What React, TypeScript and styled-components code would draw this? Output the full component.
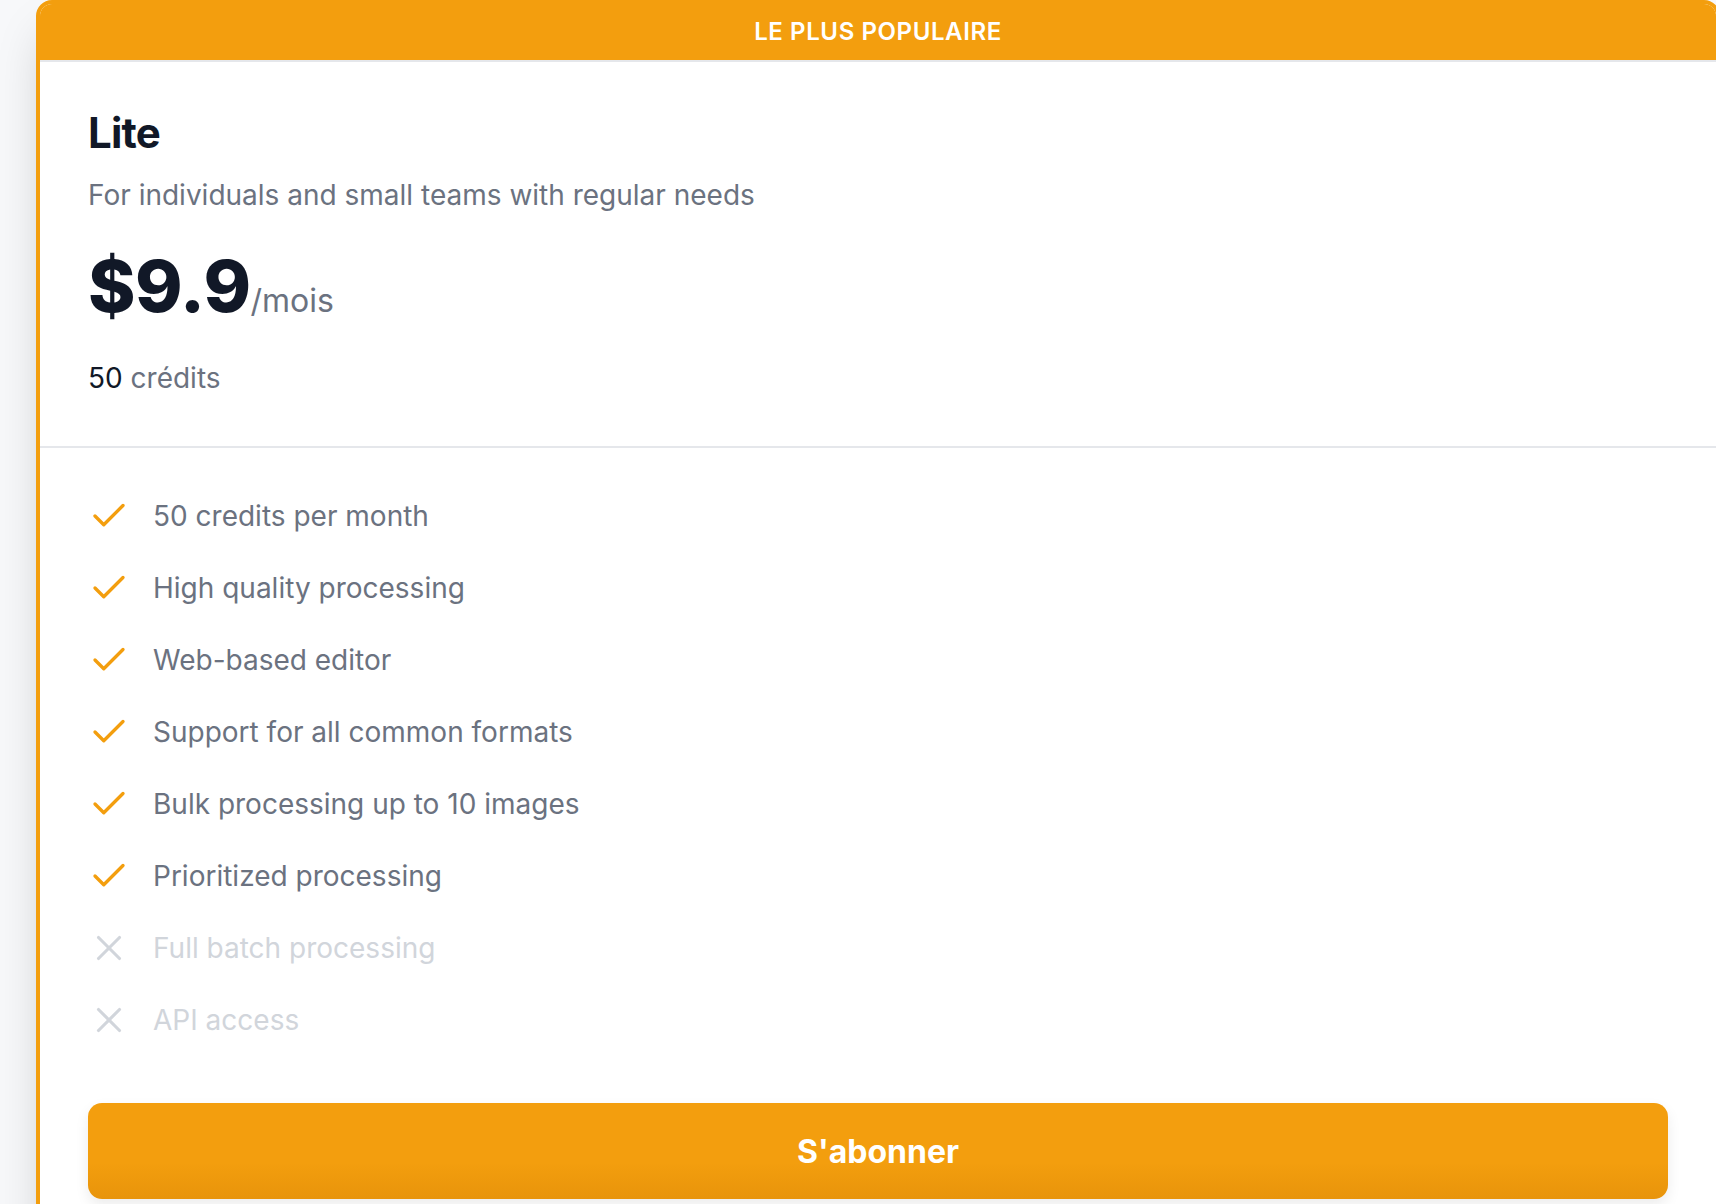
import React from 'react';
import styled, { createGlobalStyle } from 'styled-components';
import { Check, X } from 'lucide-react';

const GlobalStyle = createGlobalStyle`
  html, body {
    margin: 0;
    padding: 0;
    overflow: hidden;
    background: #f7f8fa;
  }
  * {
    box-sizing: border-box;
  }
`;

const Page = styled.div`
  width: 1716px;
  height: 1204px;
  padding-left: 36px;
  font-family: Inter, 'Noto Sans', sans-serif;
  overflow: hidden;
`;

const Card = styled.div`
  width: 1684px;
  background: #ffffff;
  border: 4px solid #f39e0e;
  border-radius: 16px;
  box-shadow: 0 25px 50px -12px rgba(0, 0, 0, 0.22);
  overflow: hidden;
`;

const Ribbon = styled.div`
  height: 58px;
  padding-bottom: 2px;
  background: #f39e0e;
  border-bottom: 2px solid #e5e7eb;
  display: flex;
  align-items: center;
  justify-content: center;
  color: #ffffff;
  font-size: 24px;
  font-weight: 600;
  letter-spacing: 0.025em;
  text-transform: uppercase;
`;

const Top = styled.div`
  padding: 46px 48px 47px;
  border-bottom: 2px solid #e5e7eb;
`;

const Title = styled.h3`
  margin: 0;
  font-size: 42px;
  line-height: 50px;
  font-weight: 700;
  letter-spacing: -0.8px;
  color: #111827;
`;

const Desc = styled.p`
  margin: 16px 0 0;
  font-size: 28px;
  line-height: 42px;
  color: #6b7280;
`;

const PriceRow = styled.div`
  margin-top: 34px;
  height: 72px;
  display: flex;
  align-items: baseline;
`;

const Amount = styled.span`
  font-size: 72px;
  line-height: 72px;
  font-weight: 800;
  letter-spacing: -0.6px;
  color: #111827;
`;

const Period = styled.span`
  font-size: 32px;
  line-height: 40px;
  color: #6b7280;
`;

const Credits = styled.div`
  margin-top: 35px;
  font-size: 28px;
  line-height: 42px;
  color: #6b7280;

  strong {
    font-weight: 400;
    color: #111827;
  }
`;

const Body = styled.div`
  padding: 47px 48px 48px;
`;

const FeatureList = styled.ul`
  list-style: none;
  margin: 0;
  padding: 0;
  display: flex;
  flex-direction: column;
  gap: 30px;
`;

const Feature = styled.li<{ $off?: boolean }>`
  display: flex;
  align-items: center;
  gap: 23px;
  height: 42px;
  font-size: 28px;
  line-height: 42px;
  color: ${(p) => (p.$off ? '#d1d5db' : '#6b7280')};

  svg {
    flex: none;
    color: ${(p) => (p.$off ? '#d1d5db' : '#f39e0e')};
  }
`;

const Subscribe = styled.button`
  display: block;
  width: 100%;
  height: 96px;
  margin-top: 62px;
  border: none;
  border-radius: 14px;
  background: linear-gradient(180deg, #f39e0e 0%, #f39e0e 62%, #e8940b 100%);
  box-shadow: 0 6px 14px rgba(0, 0, 0, 0.08);
  color: #ffffff;
  font-family: Inter, 'Noto Sans', sans-serif;
  font-size: 32px;
  font-weight: 700;
  cursor: pointer;
`;

const features = [
  { text: '50 credits per month', on: true },
  { text: 'High quality processing', on: true },
  { text: 'Web-based editor', on: true },
  { text: 'Support for all common formats', on: true },
  { text: 'Bulk processing up to 10 images', on: true },
  { text: 'Prioritized processing', on: true },
  { text: 'Full batch processing', on: false },
  { text: 'API access', on: false },
];

export default function App() {
  return (
    <>
      <GlobalStyle />
      <Page>
        <Card>
          <Ribbon>Le plus populaire</Ribbon>
          <Top>
            <Title>Lite</Title>
            <Desc>For individuals and small teams with regular needs</Desc>
            <PriceRow>
              <Amount>$9.9</Amount>
              <Period>/mois</Period>
            </PriceRow>
            <Credits>
              <strong>50</strong> crédits
            </Credits>
          </Top>
          <Body>
            <FeatureList>
              {features.map((f) => (
                <Feature key={f.text} $off={!f.on}>
                  {f.on ? <Check size={42} strokeWidth={1.9} /> : <X size={42} strokeWidth={1.8} />}
                  {f.text}
                </Feature>
              ))}
            </FeatureList>
            <Subscribe>S'abonner</Subscribe>
          </Body>
        </Card>
      </Page>
    </>
  );
}
